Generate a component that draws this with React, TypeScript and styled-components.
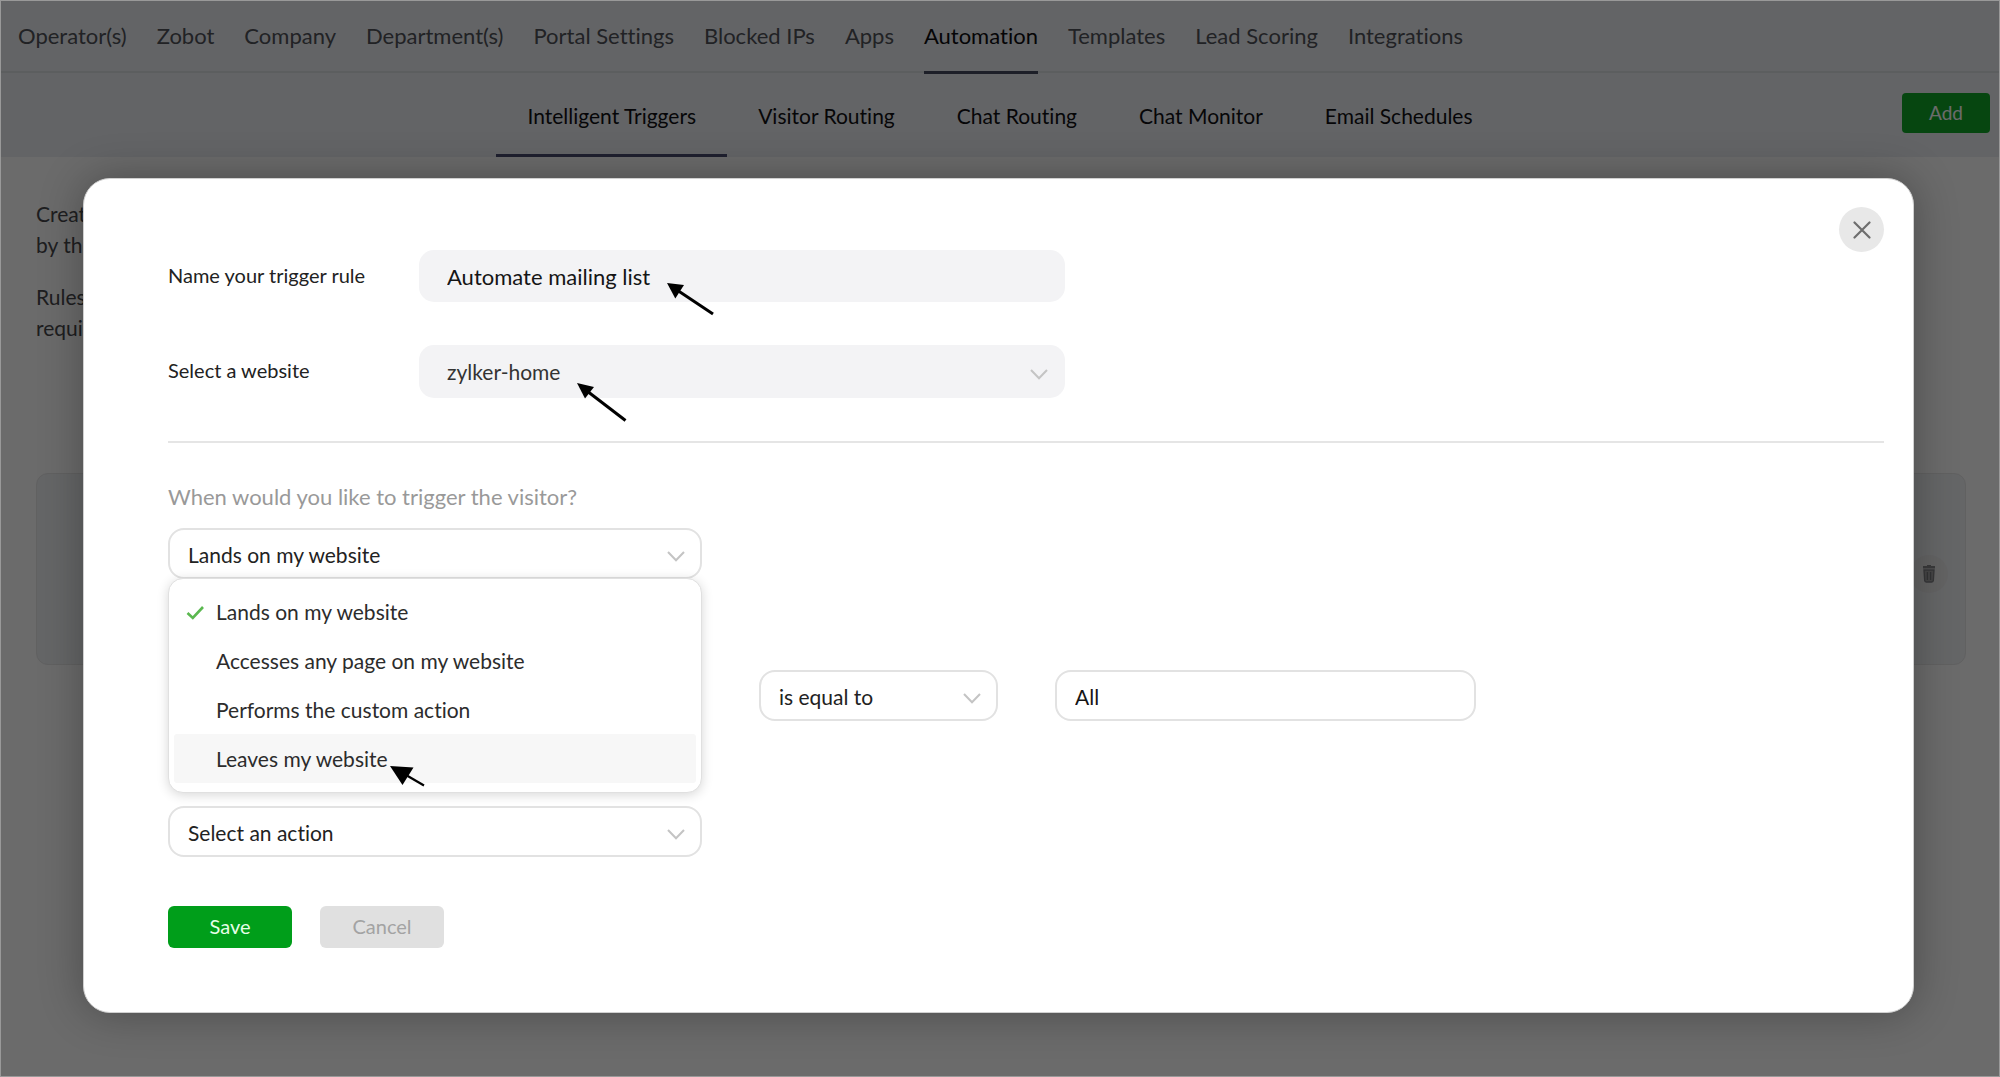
import React, { useId } from "react";
import styled, { createGlobalStyle } from "styled-components";

const GlobalStyle = createGlobalStyle`
  *, *::before, *::after { box-sizing: border-box; }
  body { margin: 0; background: #fff; }
  body, button, input, select {
    font-family: Lato, "Open Sans", "Liberation Sans", sans-serif;
    font-variant-ligatures: none;
  }
`;

const Screen = styled.div`
  position: relative;
  min-height: 100vh;
  overflow: hidden;
`;

const MainNav = styled.nav`
  display: flex;
  gap: 30px;
  height: 73px;
  padding: 0 18px;
  background: #eceef2;
  border-bottom: 2px solid #dcdfe3;
`;

const MainLink = styled.a<{ $active?: boolean }>`
  display: flex;
  align-items: center;
  height: 74px;
  border-bottom: 3px solid ${(p) => (p.$active ? "#454a60" : "transparent")};
  color: ${(p) => (p.$active ? "#0c0c10" : "#505258")};
  font-size: 22px;
  line-height: 26px;
  text-decoration: none;
  white-space: nowrap;
`;

const SubNav = styled.nav`
  display: grid;
  grid-template-columns: 1fr auto 1fr;
  height: 84px;
  padding: 0 10px;
  background: #eceef2;
`;

const SubLinks = styled.div`
  display: flex;
  grid-column: 2;
`;

const SubLink = styled.a<{ $active?: boolean }>`
  display: flex;
  align-items: center;
  padding: 5px 31px 0;
  border-bottom: 3px solid ${(p) => (p.$active ? "#4a4c70" : "transparent")};
  color: #101014;
  font-size: 21px;
  line-height: 26px;
  text-decoration: none;
  white-space: nowrap;
`;

const AddButton = styled.button`
  justify-self: end;
  width: 88px;
  height: 40px;
  margin-top: 20px;
  padding: 0 0 2px;
  border: 0;
  border-radius: 4px;
  background: #10a828;
  color: #fff;
  font-size: 19px;
`;

const Content = styled.main`
  padding: 41px 34px 0 36px;
`;

const Paragraph = styled.p`
  margin: 0 0 21px;
  color: #48494c;
  font-size: 21px;
  line-height: 31px;
`;

const RuleCard = styled.div`
  display: flex;
  align-items: center;
  justify-content: flex-end;
  height: 192px;
  margin-top: 130px;
  padding: 10px 17px 0;
  border: 1px solid #e6e6e8;
  border-radius: 12px;
  background: #f1f2f5;
`;

const TrashButton = styled.button`
  display: grid;
  place-items: center;
  width: 38px;
  height: 38px;
  padding: 0;
  border: 0;
  border-radius: 50%;
  background: #ebebed;
`;

const Overlay = styled.div`
  position: absolute;
  inset: 0;
  padding: 177px 85px 62px 82px;
  border: 1px solid #999;
  background: rgba(0, 0, 0, 0.58);
`;

const Dialog = styled.form`
  position: relative;
  padding: 71px 29px 64px 84px;
  border: 1px solid #d0d0d0;
  border-radius: 27px;
  background: #fff;
  box-shadow: 0 0 44px rgba(0, 0, 0, 0.3);
`;

const CloseButton = styled.button`
  position: absolute;
  top: 28px;
  right: 29px;
  display: grid;
  place-items: center;
  width: 45px;
  height: 45px;
  padding: 0;
  border: 0;
  border-radius: 50%;
  background: #e8e8e8;
`;

const FieldRow = styled.div`
  display: grid;
  grid-template-columns: 251px 646px;
  align-items: center;
  margin-bottom: 43px;
`;

const FieldLabel = styled.label`
  padding-bottom: 3px;
  color: #222;
  font-size: 20px;
  line-height: 26px;
`;

const Control = styled.div`
  position: relative;
`;

const FilledInput = styled.input`
  display: block;
  width: 100%;
  height: 52px;
  padding: 0 28px;
  border: 0;
  border-radius: 15px;
  outline: 0;
  background: #f3f3f5;
  color: #151515;
  font-size: 22px;
`;

const FilledSelect = styled.select`
  display: block;
  appearance: none;
  width: 100%;
  height: 53px;
  padding: 0 28px;
  border: 0;
  border-radius: 15px;
  outline: 0;
  background: #f3f3f5;
  color: #333;
  font-size: 21px;
`;

const OutlinedSelect = styled.select`
  display: block;
  appearance: none;
  width: 100%;
  height: 51px;
  padding: 2px 18px 0;
  border: 2px solid #e2e2e2;
  border-radius: 16px;
  outline: 0;
  background: #fff;
  color: #222;
  font-size: 21px;
`;

const OutlinedInput = styled.input`
  display: block;
  width: 100%;
  height: 51px;
  padding: 2px 18px 0;
  border: 2px solid #e2e2e2;
  border-radius: 16px;
  outline: 0;
  background: #fff;
  color: #151515;
  font-size: 21px;
`;

const ChevronBox = styled.svg`
  position: absolute;
  top: 50%;
  right: 17px;
  margin-top: -3px;
  pointer-events: none;
`;

const Divider = styled.hr`
  height: 2px;
  margin: 0;
  border: 0;
  background: #e5e5e5;
`;

const Question = styled.h2`
  margin: 40px 0 17px;
  color: #999;
  font-size: 22px;
  font-weight: 400;
  line-height: 28px;
`;

const TriggerControl = styled(Control)`
  width: 534px;
`;

const Menu = styled.ul`
  position: absolute;
  z-index: 1;
  top: 50px;
  left: 0;
  width: 100%;
  margin: 0;
  padding: 8px 5px 9px;
  border: 1px solid #e0e0e0;
  border-radius: 15px;
  background: #fff;
  box-shadow: 0 2px 12px rgba(0, 0, 0, 0.16);
  list-style: none;
`;

const Option = styled.li<{ $hovered?: boolean }>`
  display: grid;
  grid-template-columns: 30px 1fr;
  align-items: center;
  height: 49px;
  padding: 0 12px;
  border-radius: 3px;
  background: ${(p) => (p.$hovered ? "#f7f7f7" : "transparent")};
  color: #2c2c2c;
  font-size: 21px;
  line-height: 26px;
`;

const OptionText = styled.span`
  grid-column: 2;
`;

const ConditionRow = styled.div`
  display: grid;
  grid-template-columns: 239px 421px;
  gap: 57px;
  margin: 91px 0 85px 591px;
`;

const Actions = styled.div`
  display: flex;
  gap: 28px;
  margin-top: 49px;
`;

const ActionButton = styled.button<{ $primary?: boolean }>`
  width: 124px;
  height: 42px;
  padding: 0 0 2px;
  border: 0;
  border-radius: 6px;
  background: ${(p) => (p.$primary ? "#009e1a" : "#e0e0e0")};
  color: ${(p) => (p.$primary ? "#e6ffe8" : "#a3a3a3")};
  font-size: 20px;
`;

const Pointer = styled.svg<{ $x: number; $y: number }>`
  position: absolute;
  z-index: 2;
  left: ${(p) => p.$x}px;
  top: ${(p) => p.$y}px;
  pointer-events: none;
`;

const Chevron = () => (
  <ChevronBox width="18" height="11" viewBox="0 0 18 11" fill="none" stroke="#c4c4c4" strokeWidth="2" aria-hidden="true">
    <path d="M1 1 L9 9.3 L17 1" />
  </ChevronBox>
);

const mainLinks = [
  "Operator(s)", "Zobot", "Company", "Department(s)", "Portal Settings", "Blocked IPs",
  "Apps", "Automation", "Templates", "Lead Scoring", "Integrations",
];
const subLinks = ["Intelligent Triggers", "Visitor Routing", "Chat Routing", "Chat Monitor", "Email Schedules"];
const triggers = [
  "Lands on my website", "Accesses any page on my website", "Performs the custom action", "Leaves my website",
];

export default function App() {
  const id = useId();
  return (
    <Screen>
      <GlobalStyle />
      <MainNav aria-label="Settings">
        {mainLinks.map((name) => (
          <MainLink key={name} href="#" $active={name === "Automation"}>{name}</MainLink>
        ))}
      </MainNav>
      <SubNav aria-label="Automation">
        <SubLinks>
          {subLinks.map((name, i) => (
            <SubLink key={name} href="#" $active={i === 0}>{name}</SubLink>
          ))}
        </SubLinks>
        <AddButton type="button">Add</AddButton>
      </SubNav>
      <Content>
        <Paragraph>Create<br />by the</Paragraph>
        <Paragraph>Rules<br />require</Paragraph>
        <RuleCard>
          <TrashButton type="button" aria-label="Delete rule">
            <svg width="14" height="18" viewBox="0 0 14 18" aria-hidden="true">
              <path d="M5 1 V0 H9 V1 H13 V3.5 H1 V1 Z" fill="#8a8b8e" />
              <path d="M2 5 H12 L11.3 15.5 Q11.2 17 9.8 17 H4.2 Q2.8 17 2.7 15.5 Z" fill="#a6a6a8" stroke="#828386" strokeWidth="1.4" />
              <path d="M5.4 7 V15 M8.6 7 V15" stroke="#78797c" strokeWidth="1.3" />
            </svg>
          </TrashButton>
        </RuleCard>
      </Content>

      <Overlay>
        <Dialog role="dialog" aria-label="Trigger rule" onSubmit={(e) => e.preventDefault()}>
          <CloseButton type="button" aria-label="Close">
            <svg width="18" height="18" viewBox="0 0 18 18" fill="none" stroke="#6e6e6e" strokeWidth="2.2" strokeLinecap="round" aria-hidden="true">
              <path d="M1.5 1.5 L16.5 16.5 M16.5 1.5 L1.5 16.5" />
            </svg>
          </CloseButton>

          <FieldRow>
            <FieldLabel htmlFor={`${id}-name`}>Name your trigger rule</FieldLabel>
            <Control>
              <FilledInput id={`${id}-name`} defaultValue="Automate mailing list" />
              <Pointer $x={248} $y={32} width="48" height="34" viewBox="0 0 48 34" aria-hidden="true">
                <path d="M0 1 L17 3 L8.3 16.5 Z" />
                <path d="M10 8 L46 32" stroke="#000" strokeWidth="3" />
              </Pointer>
            </Control>
          </FieldRow>
          <FieldRow>
            <FieldLabel htmlFor={`${id}-site`}>Select a website</FieldLabel>
            <Control>
              <FilledSelect id={`${id}-site`} defaultValue="zylker-home">
                <option>zylker-home</option>
              </FilledSelect>
              <Chevron />
              <Pointer $x={158} $y={38} width="50" height="40" viewBox="0 0 50 40" aria-hidden="true">
                <path d="M0 0 L17 4 L8 15.5 Z" />
                <path d="M10 8 L48.5 37.5" stroke="#000" strokeWidth="3" />
              </Pointer>
            </Control>
          </FieldRow>

          <Divider />

          <Question id={`${id}-question`}>When would you like to trigger the visitor?</Question>
          <TriggerControl>
            <OutlinedSelect aria-labelledby={`${id}-question`} defaultValue={triggers[0]}>
              {triggers.map((t) => <option key={t}>{t}</option>)}
            </OutlinedSelect>
            <Chevron />
            <Menu role="listbox" aria-labelledby={`${id}-question`}>
              {triggers.map((t, i) => (
                <Option key={t} role="option" aria-selected={i === 0} $hovered={i === 3}>
                  {i === 0 && (
                    <svg width="18" height="16" viewBox="0 0 18 16" fill="none" stroke="#5bb850" strokeWidth="2.6" aria-hidden="true">
                      <path d="M1.5 9 L6.8 14 L17 3" />
                    </svg>
                  )}
                  <OptionText>{t}</OptionText>
                </Option>
              ))}
            </Menu>
            <Pointer $x={222} $y={238} width="36" height="22" viewBox="0 0 36 22" aria-hidden="true">
              <path d="M0 0 L23.5 1.5 L12.5 19 Z" />
              <path d="M16 9 L34 19.5" stroke="#000" strokeWidth="2.2" />
            </Pointer>
          </TriggerControl>

          <ConditionRow>
            <Control>
              <OutlinedSelect aria-label="Comparison" defaultValue="is equal to">
                <option>is equal to</option>
              </OutlinedSelect>
              <Chevron />
            </Control>
            <OutlinedInput aria-label="Value" defaultValue="All" />
          </ConditionRow>

          <TriggerControl>
            <OutlinedSelect aria-label="Action" defaultValue="Select an action">
              <option>Select an action</option>
            </OutlinedSelect>
            <Chevron />
          </TriggerControl>

          <Actions>
            <ActionButton type="submit" $primary>Save</ActionButton>
            <ActionButton type="button">Cancel</ActionButton>
          </Actions>
        </Dialog>
      </Overlay>
    </Screen>
  );
}
